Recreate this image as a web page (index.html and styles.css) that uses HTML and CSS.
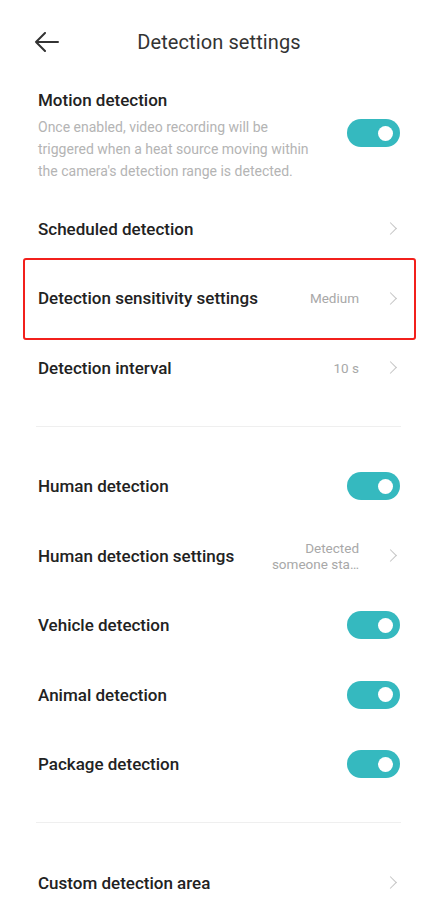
FILE: index.html
```html
<!DOCTYPE html>
<html>
<head>
<meta charset="utf-8">
<link rel="stylesheet" href="styles.css">
</head>
<body>
<div class="page">
  <header class="header">
    <svg class="back" width="26" height="20" viewBox="0 0 26 20"><path d="M24 10H2M11 1L2 10l9 9" fill="none" stroke="#333" stroke-width="2" stroke-linecap="round" stroke-linejoin="round"/></svg>
    <h1 class="title">Detection settings</h1>
  </header>

  <section class="motion">
    <div class="motion-text">
      <div class="label">Motion detection</div>
      <div class="desc">Once enabled, video recording will be triggered when a heat source moving within the camera's detection range is detected.</div>
    </div>
    <span class="toggle"></span>
  </section>

  <div class="row"><span class="label">Scheduled detection</span><span class="right"><span class="chev"></span></span></div>
  <div class="row highlight"><span class="label">Detection sensitivity settings</span><span class="right"><span class="value">Medium</span><span class="chev"></span></span></div>
  <div class="row"><span class="label">Detection interval</span><span class="right"><span class="value">10 s</span><span class="chev"></span></span></div>

  <div class="divider"></div>

  <div class="row"><span class="label">Human detection</span><span class="toggle"></span></div>
  <div class="row"><span class="label">Human detection settings</span><span class="right"><span class="value two">Detected<br>someone sta…</span><span class="chev"></span></span></div>
  <div class="row"><span class="label">Vehicle detection</span><span class="toggle"></span></div>
  <div class="row"><span class="label">Animal detection</span><span class="toggle"></span></div>
  <div class="row"><span class="label">Package detection</span><span class="toggle"></span></div>

  <div class="divider"></div>

  <div class="row"><span class="label">Custom detection area</span><span class="right"><span class="chev"></span></span></div>
</div>
</body>
</html>
```

FILE: styles.css
```css
* { box-sizing: border-box; }
html, body { margin: 0; padding: 0; background: #fff; }
body { font-family: Roboto, "Noto Sans", sans-serif; color: #1c1c1c; }
.page { width: 444px; padding: 0 44px 0 38px; }

.header { height: 84px; display: flex; align-items: center; justify-content: center; position: relative; }
.back { position: absolute; left: -4px; top: 32px; }
.title { margin: 0; font-size: 20px; font-weight: 400; color: #333; letter-spacing: 0.1px; }

.motion { display: flex; justify-content: space-between; align-items: flex-start; padding-top: 4px; height: 110px; }
.motion-text { width: 272px; }
.motion .label { line-height: 24px; }
.motion .toggle { margin-top: 31px; }
.desc { font-size: 14px; line-height: 22px; color: #b4b4b4; margin-top: 4px; }

.label { font-size: 17px; font-weight: 500; color: #222; }

.row { height: 69.5px; display: flex; align-items: center; justify-content: space-between; position: relative; }
.right { display: flex; align-items: center; }
.value { font-size: 13.5px; color: #a8a8a8; margin-right: 27px; text-align: right; }
.value.two { line-height: 16px; font-size: 13.5px; }
.chev { width: 9px; height: 9px; border-top: 1.4px solid #c4c4c4; border-right: 1.4px solid #c4c4c4; transform: rotate(45deg); margin-right: 5px; }

.highlight::after { content: ""; position: absolute; left: -15px; right: -16px; top: -6px; bottom: -7px; border: 2px solid #f2201c; border-radius: 3px; }

.toggle { width: 53px; height: 28px; border-radius: 14px; background: #35b9bf; position: relative; flex-shrink: 0; }
.toggle::after { content: ""; position: absolute; right: 7px; top: 6.5px; width: 15px; height: 15px; border-radius: 50%; background: #fff; }

.divider { height: 1px; background: #efefef; margin: 23px -1px 25px -2px; }
```
